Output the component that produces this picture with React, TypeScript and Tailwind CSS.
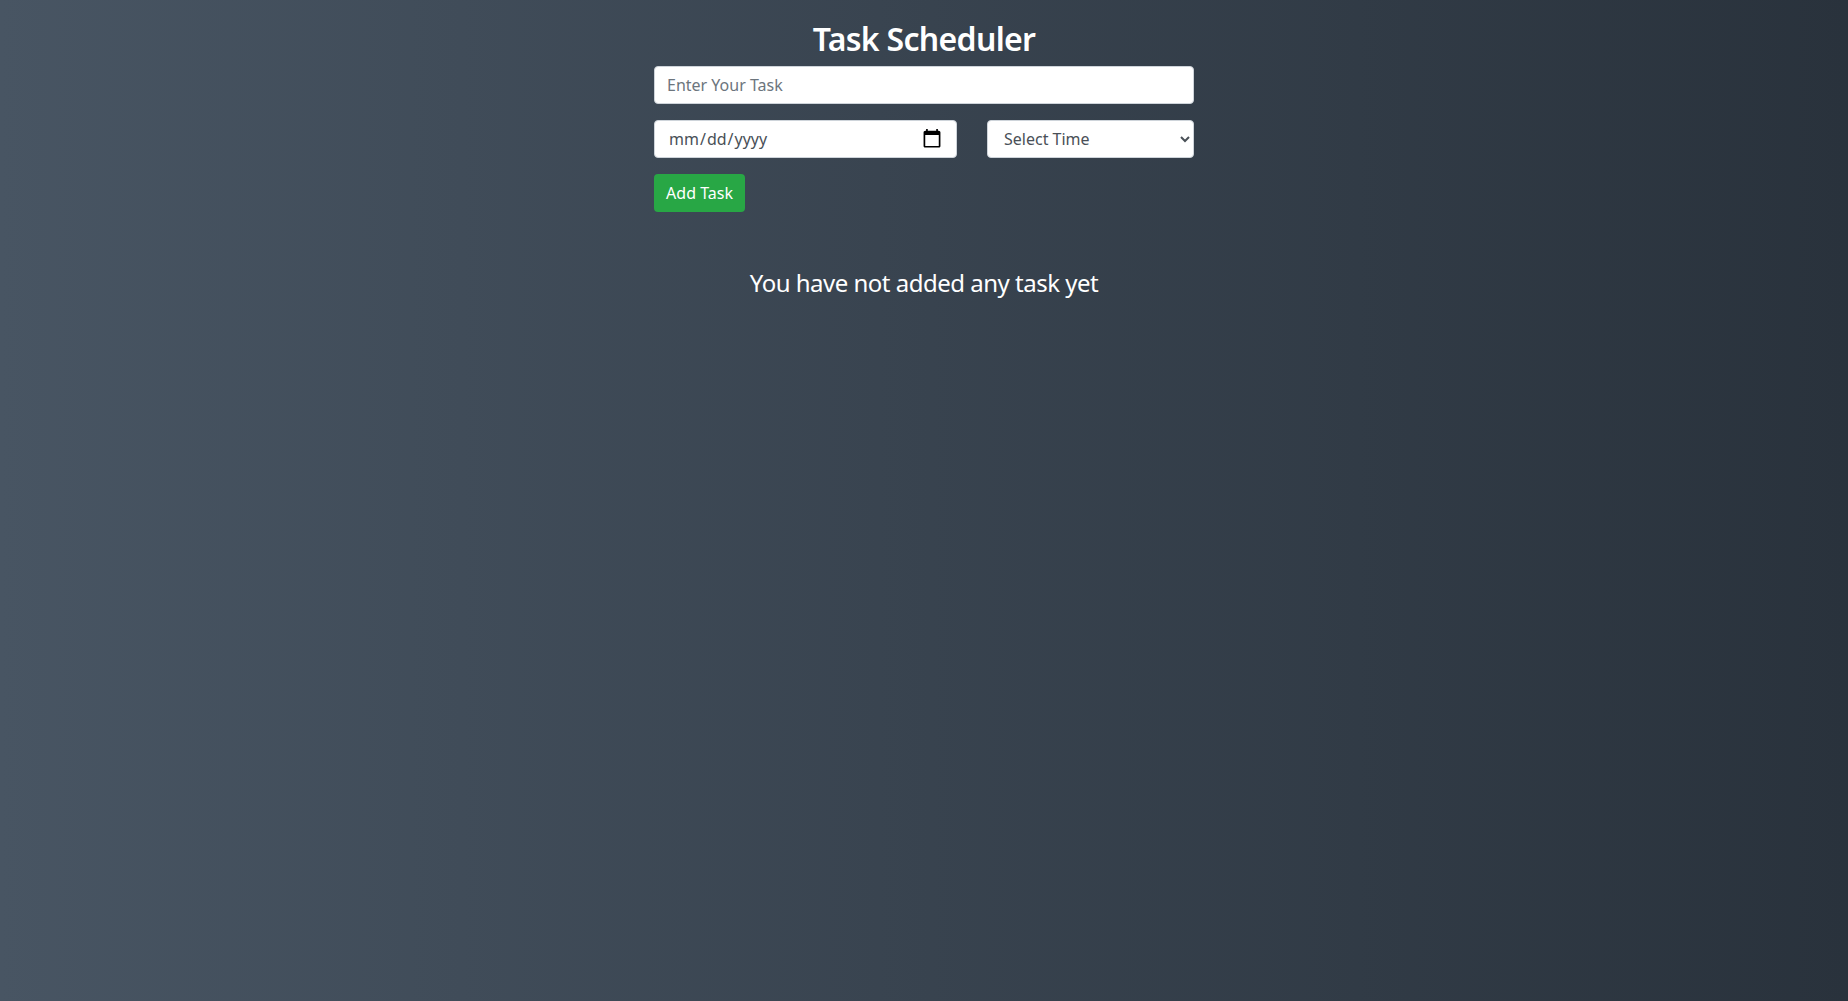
import React from 'react'

function App() {
  return (
    <div
      className="min-h-screen w-full bg-gradient-to-r from-[#485563] to-[#29323c] text-white"
      style={{ fontFamily: '"Noto Sans", "Open Sans", sans-serif' }}
    >
      <div className="w-[540px] mx-auto pt-5">
        <h1 className="text-[32px] leading-[38px] font-semibold tracking-[-0.7px] text-center mb-2">Task Scheduler</h1>
        <input
          type="text"
          placeholder="Enter Your Task"
          className="block w-full h-[38px] px-3 rounded bg-white border border-[#ced4da] text-[#495057] text-base placeholder:text-[#6c757d] outline-none"
        />
        <div className="flex justify-between mt-4">
          <input
            type="date"
            className="block w-[303px] h-[38px] pl-[13px] pr-[14px] rounded bg-white border border-[#ced4da] text-[#495057] text-base outline-none [&::-webkit-calendar-picker-indicator]:scale-[1.35]"
          />
          <select
            defaultValue=""
            className="block w-[207px] h-[38px] pl-3 pr-1 rounded bg-white border border-[#ced4da] text-[#495057] text-base outline-none"
          >
            <option value="" disabled>Select Time</option>
            <option>9:00 AM</option>
            <option>12:00 PM</option>
            <option>3:00 PM</option>
          </select>
        </div>
        <button className="mt-4 h-[38px] w-[91px] rounded bg-[#28a745] text-white text-base">Add Task</button>
        <p className="text-center text-2xl tracking-[-0.5px] mt-[55px]">You have not added any task yet</p>
      </div>
    </div>
  )
}

export default App
